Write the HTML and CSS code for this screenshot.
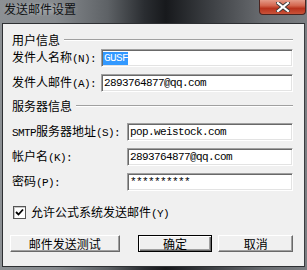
FILE: index.html
```html
<!DOCTYPE html>
<html lang="zh-CN">
<head>
  <meta charset="UTF-8">
  <title>发送邮件设置</title>
  <link rel="stylesheet" href="styles.css">
</head>
<body>

<div class="window">
  <div class="titlebar">
    <span class="title">发送邮件设置</span>
    <div class="close">
      <svg width="14" height="10" viewBox="0 0 14 10">
        <path d="M2 1 L12 9 M12 1 L2 9" stroke="#3a3a3a" stroke-width="4" stroke-linecap="square"/>
        <path d="M2 1 L12 9 M12 1 L2 9" stroke="#ffffff" stroke-width="2.2" stroke-linecap="square"/>
      </svg>
    </div>
  </div>

  <div class="client">
    <div class="group-head"><span>用户信息</span><i class="rule"></i></div>

    <div class="row row-user first">
      <label>发件人名称<span class="en">(N):</span></label>
      <div class="field"><span class="sel">GUSF</span></div>
    </div>
    <div class="row row-user">
      <label>发件人邮件<span class="en">(A):</span></label>
      <div class="field">2893764877@qq.com</div>
    </div>

    <div class="group-head server"><span>服务器信息</span><i class="rule"></i></div>

    <div class="row row-server first">
      <label><span class="en">SMTP</span>服务器地址<span class="en">(S):</span></label>
      <div class="field">pop.weistock.com</div>
    </div>
    <div class="row row-server">
      <label>帐户名<span class="en">(K):</span></label>
      <div class="field">2893764877@qq.com</div>
    </div>
    <div class="row row-server">
      <label>密码<span class="en">(P):</span></label>
      <div class="field">**********</div>
    </div>

    <div class="check">
      <span class="box">
        <svg width="9" height="9" viewBox="0 0 9 9">
          <path d="M1 4 L3.5 6.5 L8 1.5" fill="none" stroke="#000" stroke-width="1.8"/>
        </svg>
      </span>
      <span>允许公式系统发送邮件<span class="en">(Y)</span></span>
    </div>

    <div class="buttons">
      <button class="btn btn-test">邮件发送测试</button>
      <button class="btn btn-default">确定</button>
      <button class="btn">取消</button>
    </div>
  </div>
</div>

</body>
</html>
```

FILE: styles.css
```css
body {
  margin: 0;
  background: #2a2c2f;
  font-family: "Noto Sans CJK SC", sans-serif;
  font-size: 12px;
  color: #000;
}
.window {
  width: 307px;
  height: 270px;
  box-sizing: border-box;
  padding: 0 2px 3px 2px;
  display: flex;
  flex-direction: column;
  background: linear-gradient(90deg, #8c9094 0%, #868a8e 18%, #5e6266 35%, #2a2d31 47%, #17191c 54%, #3b3e42 68%, #6a6d71 86%, #7b7e82 100%);
}
.titlebar {
  height: 23px;
  display: flex;
  justify-content: space-between;
  align-items: flex-start;
  flex-shrink: 0;
}
.title {
  margin-top: 2px;
  padding: 0 2px;
  line-height: 14px;
  color: #101214;
  background: radial-gradient(ellipse at center, rgba(190, 195, 200, 0.55) 0%, rgba(190, 195, 200, 0) 75%);
}
.close {
  width: 47px;
  height: 15px;
  box-sizing: border-box;
  margin-right: -1px;
  border: 1px solid #4a2420;
  border-top: none;
  border-radius: 0 0 4px 4px;
  background: linear-gradient(#e49a88 0%, #d4664f 40%, #b8321c 60%, #c9533a 100%);
  display: flex;
  justify-content: center;
  align-items: center;
}
.client {
  flex: 1;
  background: #f0f0f0;
  border: 1px solid #2e3033;
  border-right-color: #3a3c3f;
  padding: 9px 11px 0 9px;
  display: flex;
  flex-direction: column;
}
.group-head {
  height: 14px;
  display: flex;
  align-items: center;
  line-height: 14px;
}
.group-head .rule {
  flex: 1;
  margin-left: 4px;
  height: 0;
  border-top: 1px solid #a0a0a0;
  border-bottom: 1px solid #ffffff;
}
.group-head.server {
  margin-top: 7px;
}
.row {
  height: 18px;
  display: flex;
  align-items: center;
  margin-top: 7px;
}
.row.first {
  margin-top: 2px;
}
.row-server.first {
  margin-top: 10px;
}
.row label {
  flex-shrink: 0;
  line-height: 14px;
}
.row-user label {
  width: 89px;
}
.row-server label {
  width: 115px;
}
.en {
  font-family: "Liberation Mono", monospace;
  font-size: 11px;
  letter-spacing: -0.6px;
}
.field {
  flex: 1;
  height: 18px;
  box-sizing: border-box;
  background: #fff;
  border: 1px solid;
  border-color: #a0a0a0 #ffffff #ffffff #a0a0a0;
  box-shadow: inset 1px 1px 0 #696969, inset -1px -1px 0 #e3e3e3;
  padding: 0 0 0 2px;
  font-family: "Liberation Mono", monospace;
  font-size: 11px;
  letter-spacing: -0.6px;
  line-height: 16px;
  white-space: nowrap;
  overflow: hidden;
}
.sel {
  display: inline-block;
  margin-left: -1px;
  padding-left: 1px;
  line-height: 13px;
  background: #3399ff;
  color: #fff;
}
.check {
  margin-top: 15px;
  margin-left: 1px;
  height: 13px;
  display: flex;
  align-items: center;
  gap: 5px;
  line-height: 13px;
}
.box {
  width: 13px;
  height: 13px;
  box-sizing: border-box;
  background: #fff;
  border: 1px solid #555;
  box-shadow: inset 1px 1px 0 #c8c8c8;
  display: flex;
  justify-content: center;
  align-items: center;
}
.buttons {
  margin-top: 16px;
  display: flex;
}
.btn {
  width: 75px;
  height: 17px;
  box-sizing: border-box;
  padding: 0;
  font-family: "Noto Sans CJK SC", sans-serif;
  font-size: 12px;
  line-height: 13px;
  color: #000;
  background: #f0f0f0;
  border: 1px solid;
  border-color: #ffffff #696969 #696969 #ffffff;
  box-shadow: inset -1px -1px 0 #a0a0a0;
}
.btn-test {
  width: 110px;
  margin-left: -2px;
}
.btn-default {
  margin-left: 18px;
  border: 1px solid #000;
  box-shadow: inset 1px 1px 0 #fff, inset -1px -1px 0 #696969, inset -2px -2px 0 #a0a0a0;
}
.btn:last-child {
  margin-left: 6px;
}
```
